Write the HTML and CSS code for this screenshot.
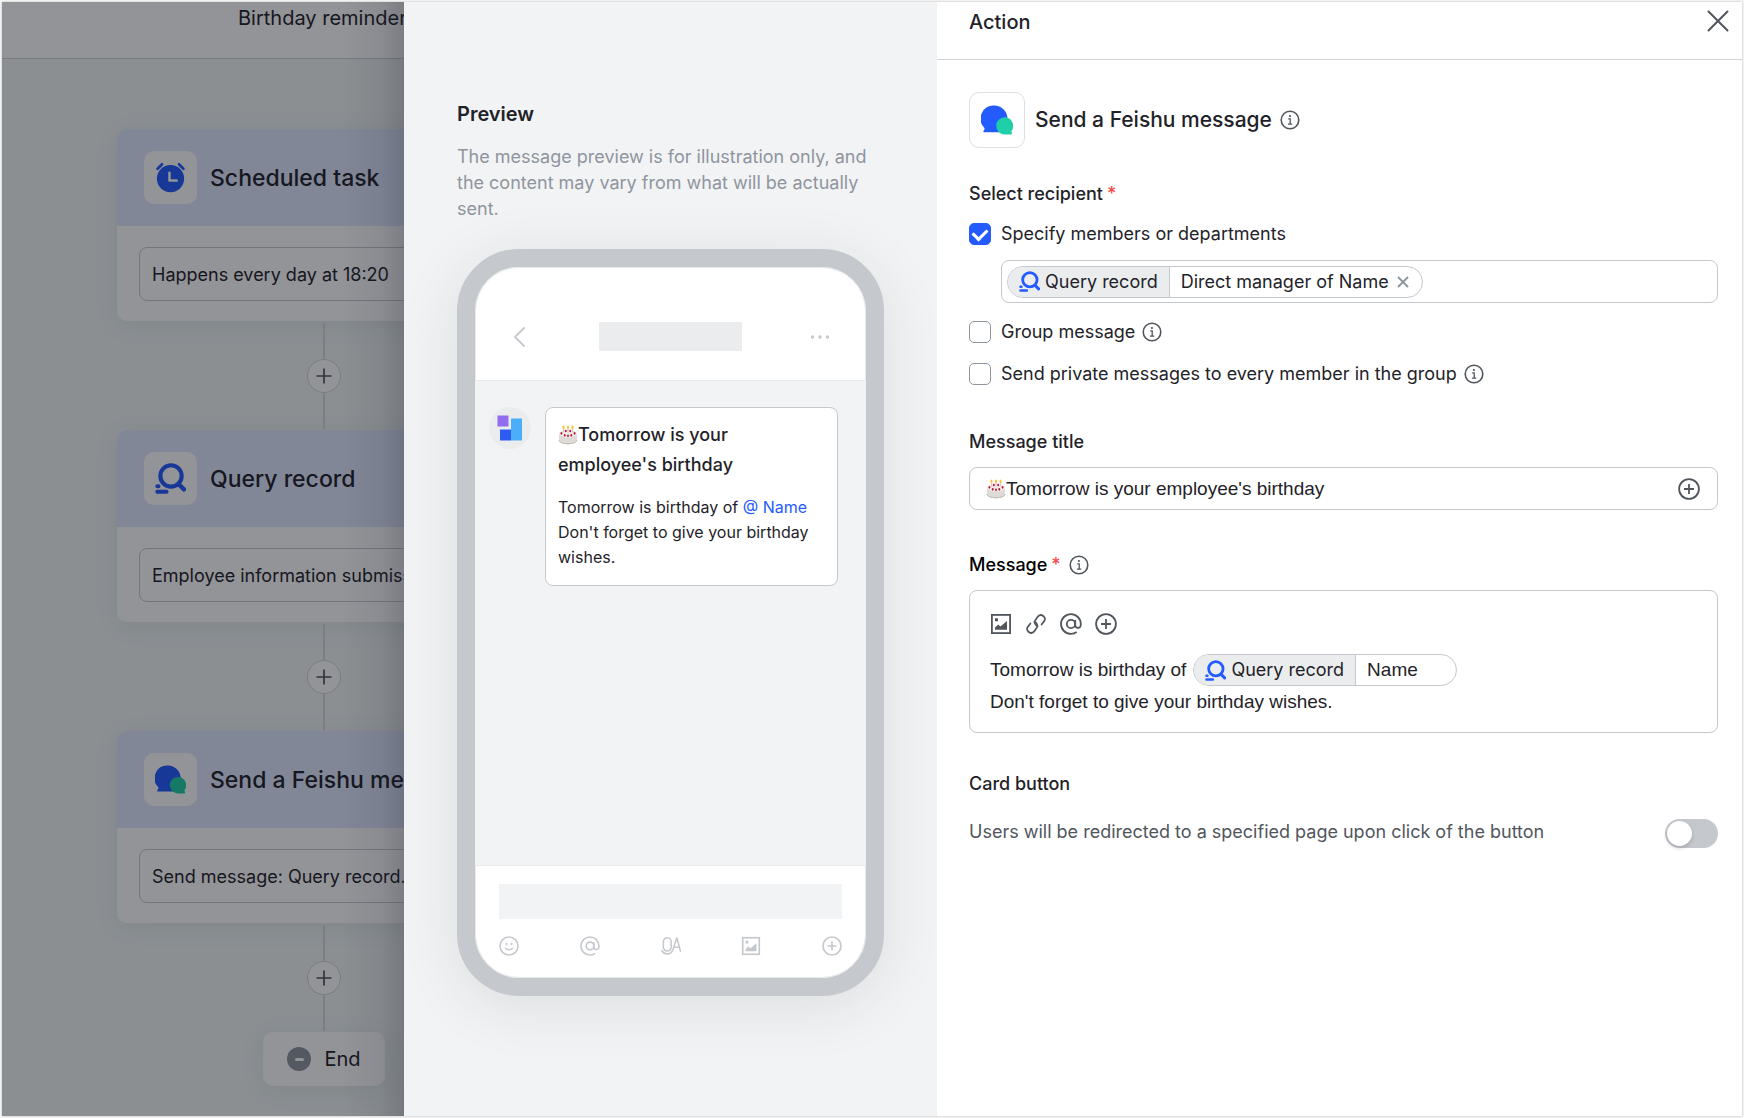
FILE: index.html
```html
<!DOCTYPE html>
<html lang="en">
<head>
  <meta charset="UTF-8" />
  <meta name="viewport" content="width=device-width, initial-scale=1.0"/>
  <title>Birthday reminder</title>
  <link rel="stylesheet" href="styles.css">
</head>
<body>
  <!-- icon sprite -->
  <svg class="sprite" aria-hidden="true">
    <symbol id="i-clock" viewBox="0 0 30 30">
      <circle cx="15" cy="16" r="13.2" fill="#245bff"/>
      <path d="M2.5 6.5 6.8 2.2M27.5 6.5 23.2 2.2" stroke="#245bff" stroke-width="2.6" stroke-linecap="round"/>
      <path d="M14 10.500V18h7" fill="none" stroke="#fff" stroke-width="2.400" stroke-linecap="round" stroke-linejoin="round"/>
    </symbol>
    <symbol id="i-query" viewBox="0 0 30 30">
      <circle cx="15.500" cy="12.500" r="10.300" fill="none" stroke="#245bff" stroke-width="4"/>
      <path d="M23 20.500l5 5" stroke="#245bff" stroke-width="4.200" stroke-linecap="round"/>
      <path d="M2.200 22.500h1.200M2.200 27.800h9" stroke="#245bff" stroke-width="3.800" stroke-linecap="round"/>
    </symbol>
    <symbol id="i-chat" viewBox="0 0 30 30">
      <path d="M12.500 1.500A12.300 12.300 0 0 1 24.800 14v12.500H2.800c-.7 0-.9-.8-.4-1.300l.8-1.300c.2-.5.1-1-.2-1.600A12.300 12.300 0 0 1 12.500 1.500z" fill="#245bff"/>
      <path d="M22.300 12.500a8 8 0 0 1 6.400 12.600c-.4.6-.2 1 .1 1.500.6.9.3 1.900-.7 1.900h-5.800a8 8 0 0 1 0-16z" fill="#1fcfa7"/>
    </symbol>
    <symbol id="i-info" viewBox="0 0 20 20">
      <circle cx="10" cy="10" r="8.800" fill="none" stroke="currentColor" stroke-width="1.600"/>
      <circle cx="9.900" cy="6" r="1.100" fill="currentColor"/>
      <path d="M8.200 8.900h2v5M7.900 14.200h4.400" fill="none" stroke="currentColor" stroke-width="1.300"/>
    </symbol>
    <symbol id="i-plus-circle" viewBox="0 0 22 22">
      <circle cx="11" cy="11" r="9.900" fill="none" stroke="currentColor" stroke-width="1.800"/>
      <path d="M11 6v10M6 11h10" stroke="currentColor" stroke-width="1.800"/>
    </symbol>
    <symbol id="i-at" viewBox="0 0 22 22">
      <circle cx="11" cy="11" r="4.200" fill="none" stroke="currentColor" stroke-width="1.800"/>
      <path d="M15.200 7v5.200a2.800 2.800 0 0 0 5.600-.4V11a9.900 9.900 0 1 0-9.900 9.900c2.200 0 4.200-.7 5.700-1.900" fill="none" stroke="currentColor" stroke-width="1.800"/>
    </symbol>
    <symbol id="i-image" viewBox="0 0 22 22">
      <rect x="1.900" y="1.900" width="18.200" height="18.200" fill="none" stroke="currentColor" stroke-width="1.800"/>
      <path d="M5 5.200h3v3H5zM5 16.800v-2.300l3.200-3 2.300 2 6.500-5.600v8.900z" fill="currentColor"/>
    </symbol>
    <symbol id="i-link" viewBox="0 0 22 22">
      <g fill="none" stroke="currentColor" stroke-width="1.700" stroke-linecap="round">
        <path d="M12.600 13.200a4 4 0 0 1-2.300-5.900l2.700-4a4 4 0 0 1 6.300 4.800l-2.700 3.500"/>
        <path d="M9.400 8.800a4 4 0 0 1 2.300 5.900l-2.700 4a4 4 0 0 1-6.300-4.800l2.700-3.500"/>
      </g>
    </symbol>
    <symbol id="i-smile" viewBox="0 0 22 22">
      <circle cx="11" cy="11" r="9.900" fill="none" stroke="currentColor" stroke-width="1.700"/>
      <path d="M8.200 7.500v2.800M13.800 7.500v2.800" stroke="currentColor" stroke-width="1.900"/>
      <path d="M6.800 13.200c2 2.700 6.400 2.700 8.400 0" fill="none" stroke="currentColor" stroke-width="1.700"/>
    </symbol>
    <symbol id="i-voice" viewBox="0 0 22 22">
      <g fill="none" stroke="currentColor" stroke-width="1.700" stroke-linecap="round" stroke-linejoin="round">
        <rect x="2.600" y="2" width="8.600" height="14.500" rx="4.300"/>
        <path d="M.8 16.200c3.500 5.200 10.500 4.300 12.200-.7L17.400 2l4 14.800M14.300 12.300h5.700"/>
      </g>
    </symbol>
    <symbol id="i-cake" viewBox="0 0 20 20">
      <path d="M1 8.500v7c0 2.200 3.900 3.900 9 3.900s9-1.700 9-3.900v-7z" fill="#dedbd6"/>
      <path d="M1 15c0 2.200 3.900 3.700 9 3.700s9-1.500 9-3.700" fill="none" stroke="#b9b4ac" stroke-width=".8"/>
      <ellipse cx="10" cy="8.500" rx="9" ry="4" fill="#f1eeea"/>
      <path d="M5.500 3v4.500M10 3v4.500M14.500 3v4.500" stroke="#e7c9c4" stroke-width="1.400"/>
      <g fill="#b5173a">
        <ellipse cx="3.400" cy="8.300" rx=".9" ry="1.400"/><ellipse cx="6.700" cy="10.300" rx=".9" ry="1.400"/><ellipse cx="10" cy="10.800" rx=".9" ry="1.400"/><ellipse cx="13.300" cy="10.300" rx=".9" ry="1.400"/><ellipse cx="16.600" cy="8.300" rx=".9" ry="1.400"/><ellipse cx="7.800" cy="6" rx=".9" ry="1.300"/><ellipse cx="12.200" cy="6" rx=".9" ry="1.300"/>
      </g>
      <g fill="#f2c230">
        <ellipse cx="5.500" cy="2.200" rx="1" ry="1.700"/><ellipse cx="10" cy="2.200" rx="1" ry="1.700"/><ellipse cx="14.500" cy="2.200" rx="1" ry="1.700"/>
      </g>
    </symbol>
    <symbol id="i-plus" viewBox="0 0 16 16">
      <path d="M8 .5v15M.5 8h15" stroke="currentColor" stroke-width="1.700"/>
    </symbol>
    <symbol id="i-close" viewBox="0 0 22 22">
      <path d="M1.500 1.500l19 19M20.500 1.500l-19 19" stroke="currentColor" stroke-width="2" stroke-linecap="round"/>
    </symbol>
    <symbol id="i-remove" viewBox="0 0 12 12">
      <path d="M1 1l10 10M11 1L1 11" stroke="currentColor" stroke-width="1.900"/>
    </symbol>
  </svg>

  <div class="app">
    <div class="workspace">
      <div class="topbar">Birthday reminder</div>
      <div class="flow">
        <div class="node">
          <div class="node-head">
            <span class="node-icon"><svg><use href="#i-clock"/></svg></span>Scheduled task
          </div>
          <div class="node-body"><div class="node-text">Happens every day at 18:20</div></div>
        </div>
        <button class="add-step" aria-label="Add step"><svg><use href="#i-plus"/></svg></button>
        <div class="node">
          <div class="node-head">
            <span class="node-icon"><svg><use href="#i-query"/></svg></span>Query record
          </div>
          <div class="node-body"><div class="node-text">Employee information submission</div></div>
        </div>
        <button class="add-step" aria-label="Add step"><svg><use href="#i-plus"/></svg></button>
        <div class="node">
          <div class="node-head">
            <span class="node-icon"><svg><use href="#i-chat"/></svg></span>Send a Feishu message
          </div>
          <div class="node-body"><div class="node-text">Send message: Query record...</div></div>
        </div>
        <button class="add-step" aria-label="Add step"><svg><use href="#i-plus"/></svg></button>
        <div class="end"><span class="end-icon"></span>End</div>
      </div>
      <div class="mask"></div>
    </div>

    <section class="preview">
      <h2>Preview</h2>
      <p class="hint">The message preview is for illustration only, and the content may vary from what will be actually sent.</p>
      <div class="phone">
        <div class="phone-head">
          <svg class="back" viewBox="0 0 17 20"><path d="M11 1 2 10l9 9" fill="none" stroke="currentColor" stroke-width="1.800" stroke-linecap="round"/></svg>
          <div class="phone-title"></div>
          <svg class="dots" viewBox="0 0 20 4"><g fill="currentColor"><circle cx="2.500" cy="2" r="1.700"/><circle cx="10" cy="2" r="1.700"/><circle cx="17.500" cy="2" r="1.700"/></g></svg>
        </div>
        <div class="phone-body">
          <span class="avatar">
            <svg viewBox="0 0 26 26"><path d="M.5.500h11v11H.5z" fill="#936df0"/><path d="M3 14.500h11v11H3z" fill="#2f5bf5"/><path d="M14 3.500h11v22H14z" fill="#4aaef9"/></svg>
          </span>
          <div class="bubble">
            <h3><svg class="cake"><use href="#i-cake"/></svg>Tomorrow is your employee's birthday</h3>
            <p>Tomorrow is birthday of <a href="#">@ Name</a><br>Don't forget to give your birthday wishes.</p>
          </div>
        </div>
        <div class="phone-foot">
          <div class="phone-input"></div>
          <div class="phone-icons">
            <svg><use href="#i-smile"/></svg>
            <svg><use href="#i-at"/></svg>
            <svg><use href="#i-voice"/></svg>
            <svg><use href="#i-image"/></svg>
            <svg><use href="#i-plus-circle"/></svg>
          </div>
        </div>
      </div>
    </section>

    <section class="action">
      <header class="action-head">
        <h2>Action</h2>
        <button class="icon-btn" aria-label="Close"><svg><use href="#i-close"/></svg></button>
      </header>
      <form class="form">
        <div class="app-row">
          <span class="app-icon"><svg><use href="#i-chat"/></svg></span>
          <h1>Send a Feishu message</h1>
          <svg class="info"><use href="#i-info"/></svg>
        </div>

        <div class="group recipients">
          <div class="label">Select recipient<span class="req">*</span></div>
          <div class="check">
            <input type="checkbox" id="members" checked>
            <label for="members">Specify members or departments</label>
          </div>
          <div class="field members-field">
            <span class="chip">
              <span class="chip-source"><svg><use href="#i-query"/></svg>Query record</span>
              <span class="chip-value">Direct manager of Name
                <button type="button" class="chip-remove" aria-label="Remove"><svg><use href="#i-remove"/></svg></button>
              </span>
            </span>
          </div>
          <div class="check">
            <input type="checkbox" id="group">
            <label for="group">Group message</label>
            <svg class="info"><use href="#i-info"/></svg>
          </div>
          <div class="check">
            <input type="checkbox" id="private">
            <label for="private">Send private messages to every member in the group</label>
            <svg class="info"><use href="#i-info"/></svg>
          </div>
        </div>

        <div class="group">
          <label class="label" for="title">Message title</label>
          <div class="field title-field">
            <svg class="cake"><use href="#i-cake"/></svg>
            <input type="text" id="title" value="Tomorrow is your employee's birthday">
            <button type="button" class="icon-btn" aria-label="Insert field"><svg><use href="#i-plus-circle"/></svg></button>
          </div>
        </div>

        <div class="group">
          <div class="label label-message" id="message-label">Message <span class="req">*</span><svg class="info"><use href="#i-info"/></svg></div>
          <div class="editor">
            <div class="tools">
              <button type="button" class="icon-btn" aria-label="Insert image"><svg><use href="#i-image"/></svg></button>
              <button type="button" class="icon-btn" aria-label="Insert link"><svg><use href="#i-link"/></svg></button>
              <button type="button" class="icon-btn" aria-label="Mention"><svg><use href="#i-at"/></svg></button>
              <button type="button" class="icon-btn" aria-label="Insert field"><svg><use href="#i-plus-circle"/></svg></button>
            </div>
            <div class="editor-text" contenteditable="true" role="textbox" aria-multiline="true" aria-labelledby="message-label">
              <div class="line">Tomorrow is birthday of
                <span class="chip" contenteditable="false">
                  <span class="chip-source"><svg><use href="#i-query"/></svg>Query record</span>
                  <span class="chip-value chip-name">Name</span>
                </span>
              </div>
              <div class="line">Don't forget to give your birthday wishes.</div>
            </div>
          </div>
        </div>

        <div class="group card-group">
          <div class="label">Card button</div>
          <div class="switch-row">
            <label for="card-button">Users will be redirected to a specified page upon click of the button</label>
            <input type="checkbox" role="switch" id="card-button" class="switch">
          </div>
        </div>
      </form>
    </section>
  </div>
</body>
</html>
```
FILE: styles.css
```css
* { box-sizing: border-box; }
body {
  margin: 0;
  padding: 2px;
  min-height: 100vh;
  display: flex;
  background: #f5f5f5;
  font-family: Inter, 'Liberation Sans', sans-serif;
  font-size: 18px;
  line-height: 26px;
  color: #1f2329;
}
h1, h2, h3, p { margin: 0; }
button, input { font: inherit; color: inherit; }
svg { display: block; flex: none; }
.sprite { position: absolute; width: 0; height: 0; }

.app {
  flex: 1;
  display: grid;
  grid-template-columns: 402px 533px 1fr;
  background: #fff;
  box-shadow: 0 0 2px rgba(0,0,0,0.25);
}

/* workspace behind the drawer */
.workspace {
  position: relative;
  overflow: hidden;
  background: #f0f6f5;
}
.topbar {
  height: 57px;
  padding: 3px 0 0 236px;
  background: #fff;
  border-bottom: 1px solid #d0d3d6;
  font-size: 20px;
  white-space: nowrap;
}
.flow {
  width: 414px;
  margin: 70px 0 0 115px;
  display: flex;
  flex-direction: column;
  align-items: center;
}
.node {
  width: 100%;
  background: #fff;
  border-radius: 10px;
  box-shadow: 0 4px 24px rgba(31,35,41,0.08);
}
.node-head {
  display: flex;
  align-items: center;
  gap: 13px;
  height: 97px;
  padding: 0 27px;
  background: #e1e8ff;
  border-radius: 10px 10px 0 0;
  font-size: 23px;
  font-weight: 500;
  white-space: nowrap;
}
.node-icon {
  display: flex;
  align-items: center;
  justify-content: center;
  width: 53px;
  height: 53px;
  background: #fff;
  border-radius: 10px;
}
.node-icon svg { width: 31px; height: 31px; }
.node-body { padding: 21px 22px 20px; }
.node-text {
  height: 54px;
  padding: 14px 12px 0;
  border: 1px solid #c5c8cd;
  border-radius: 8px;
  white-space: nowrap;
}
.add-step {
  position: relative;
  width: 34px;
  height: 34px;
  margin: 38px 0 37px;
  padding: 0;
  display: flex;
  align-items: center;
  justify-content: center;
  background: #fff;
  border: 1px solid #d0d3d6;
  border-radius: 50%;
  color: #51565d;
}
.add-step svg { width: 16px; height: 16px; }
/* connector lines above and below the button */
.add-step::before, .add-step::after {
  content: "";
  position: absolute;
  left: 15px;
  width: 2px;
  height: 37px;
  background: #d6d8dc;
}
.add-step::before { bottom: 100%; }
.add-step::after { top: 100%; }
.end {
  display: flex;
  align-items: center;
  gap: 13px;
  height: 54px;
  padding: 0 24px;
  background: #fff;
  border-radius: 10px;
  box-shadow: 0 4px 24px rgba(31,35,41,0.08);
  font-size: 20px;
}
.end-icon {
  width: 24px;
  height: 24px;
  display: flex;
  align-items: center;
  justify-content: center;
  background: #8f959e;
  border-radius: 50%;
}
.end-icon::before {
  content: "";
  width: 9px;
  height: 3px;
  background: #fff;
  border-radius: 2px;
}
.mask {
  position: absolute;
  inset: 0;
  background: linear-gradient(to left, rgba(31,35,50,0.2), rgba(31,35,50,0.07) 24px, transparent 64px), rgba(10,12,20,0.44);
}

/* preview */
.preview {
  padding: 99px 53px 0;
  background: #f2f3f5;
  overflow: hidden;
}
.preview h2 { font-size: 20px; font-weight: 600; }
.hint { margin-top: 17px; color: #8f959e; }
.phone {
  display: flex;
  flex-direction: column;
  height: 747px;
  margin-top: 27px;
  border: 18px solid #c5c8cd;
  border-radius: 62px;
  background: #f2f3f5;
  box-shadow: 0 10px 60px rgba(31,35,41,0.1);
  color: #c5c8cd;
}
.phone-head {
  display: flex;
  align-items: center;
  justify-content: space-between;
  height: 114px;
  padding: 25px 35px 0 37px;
  background: #fff;
  border: 1px solid #e6e8ea;
  border-radius: 44px 44px 0 0;
}
.back { width: 17px; height: 20px; }
.phone-title { width: 143px; height: 29px; background: #ebecee; }
.dots { width: 20px; height: 4px; }
.phone-body {
  flex: 1;
  display: flex;
  align-items: flex-start;
  gap: 14px;
  padding: 26px 28px 0 14px;
}
.avatar {
  flex: none;
  display: flex;
  align-items: center;
  justify-content: center;
  width: 42px;
  height: 42px;
  background: #ebecee;
  border-radius: 50%;
}
.avatar svg { width: 26px; height: 26px; }
.bubble {
  flex: 1;
  padding: 12px 12px 15px;
  background: #fff;
  border: 1px solid #c5c8cd;
  border-radius: 8px;
  color: #1f2329;
}
.bubble h3 { font-size: 18px; font-weight: 500; line-height: 30px; }
.bubble p { margin-top: 15px; font-size: 16px; line-height: 25px; }
.bubble a { color: #245bff; text-decoration: none; }
.cake { width: 20px; height: 20px; }
.bubble .cake { display: inline-block; vertical-align: -4px; }
.phone-foot {
  padding: 18px 23px 21px;
  background: #fff;
  border: 1px solid #e6e8ea;
  border-radius: 0 0 44px 44px;
}
.phone-input { height: 35px; background: #f2f3f5; }
.phone-icons { display: flex; justify-content: space-between; margin-top: 17px; }
.phone-icons svg { width: 20px; height: 20px; }

/* action panel */
.action-head {
  display: flex;
  align-items: flex-start;
  justify-content: space-between;
  height: 58px;
  padding: 8px 13px 0 32px;
  border-bottom: 1px solid #d0d3d6;
}
.action-head h2 { font-size: 20px; font-weight: 500; line-height: 24px; }
.icon-btn {
  padding: 0;
  border: 0;
  background: none;
  color: #51565d;
  cursor: pointer;
}
.icon-btn svg { width: 22px; height: 22px; }
.form { padding: 32px 24px 32px 32px; }
.app-row { display: flex; align-items: center; }
.app-row h1 { margin: 0 8px 0 10px; font-size: 21px; font-weight: 500; line-height: 24px; }
.app-icon {
  display: flex;
  align-items: center;
  justify-content: center;
  width: 56px;
  height: 56px;
  border: 1px solid #dee0e3;
  border-radius: 10px;
}
.app-icon svg { width: 32px; height: 32px; }
.info { width: 20px; height: 20px; color: #51565d; }
.group { margin-top: 42px; }
.recipients { margin-top: 33px; }
.card-group { margin-top: 38px; }
.label { display: flex; align-items: center; margin-bottom: 12px; font-weight: 500; }
.label-message { color: #000; }
.req { margin-left: 4px; color: #f54a45; }
.label-message .info { margin-left: 8px; }
.check { display: flex; align-items: center; margin-top: 16px; }
.label + .check { margin-top: 14px; }
.check label { margin: 0 7px 0 10px; }
.check input {
  appearance: none;
  display: flex;
  align-items: center;
  justify-content: center;
  width: 22px;
  height: 22px;
  margin: 0;
  border: 1px solid #8f959e;
  border-radius: 5px;
  background: #fff;
}
.check input:checked { background: #245bff; border-color: #245bff; }
.check input:checked::before {
  content: "";
  width: 11px;
  height: 7px;
  margin-bottom: 3px;
  border-left: 3px solid #fff;
  border-bottom: 3px solid #fff;
  transform: rotate(-45deg);
}
.field {
  display: flex;
  align-items: center;
  height: 43px;
  border: 1px solid #c5c8cd;
  border-radius: 8px;
}
.members-field { margin: 13px 0 0 32px; padding: 0 5px; }
.chip {
  display: inline-flex;
  height: 32px;
  border: 1px solid #c5c8cd;
  border-radius: 16px;
  overflow: hidden;
  font-family: Inter, 'Liberation Sans', sans-serif;
  font-size: 18px;
  line-height: 30px;
}
.chip-source {
  display: flex;
  align-items: center;
  gap: 5px;
  padding: 0 11px;
  background: #ebecee;
  border-right: 1px solid #c5c8cd;
}
.chip-source svg { width: 21px; height: 21px; }
.chip-value { display: flex; align-items: center; gap: 8px; padding: 0 13px 0 11px; }
.chip-remove { padding: 0; border: 0; background: none; color: #8f959e; }
.chip-remove svg { width: 12px; height: 12px; }
.title-field { padding: 0 17px 0 16px; }
.title-field input {
  flex: 1;
  min-width: 0;
  padding: 0;
  border: 0;
  outline: none;
  background: none;
  font-family: 'Liberation Sans', sans-serif;
  font-size: 19px;
}
.editor {
  padding: 22px 20px 14px;
  border: 1px solid #c5c8cd;
  border-radius: 8px;
}
.tools { display: flex; gap: 13px; }
.editor-text { margin-top: 19px; outline: none; font-family: 'Liberation Sans', sans-serif; font-size: 19px; }
.line { display: flex; align-items: center; gap: 7px; line-height: 32px; }
.chip-name { padding-right: 38px; font-family: 'Liberation Sans', sans-serif; font-size: 19px; }
.switch-row { display: flex; align-items: flex-start; justify-content: space-between; margin-top: 22px; color: #51565d; }
.switch {
  appearance: none;
  flex: none;
  width: 53px;
  height: 29px;
  margin: 0;
  padding: 2px;
  border-radius: 15px;
  background: #c5c8cd;
}
.switch::before {
  content: "";
  display: block;
  width: 25px;
  height: 25px;
  border-radius: 50%;
  background: #fff;
  box-shadow: 0 2px 4px rgba(31,35,41,0.2);
}
.switch:checked { background: #245bff; }
.switch:checked::before { margin-left: auto; }
```
